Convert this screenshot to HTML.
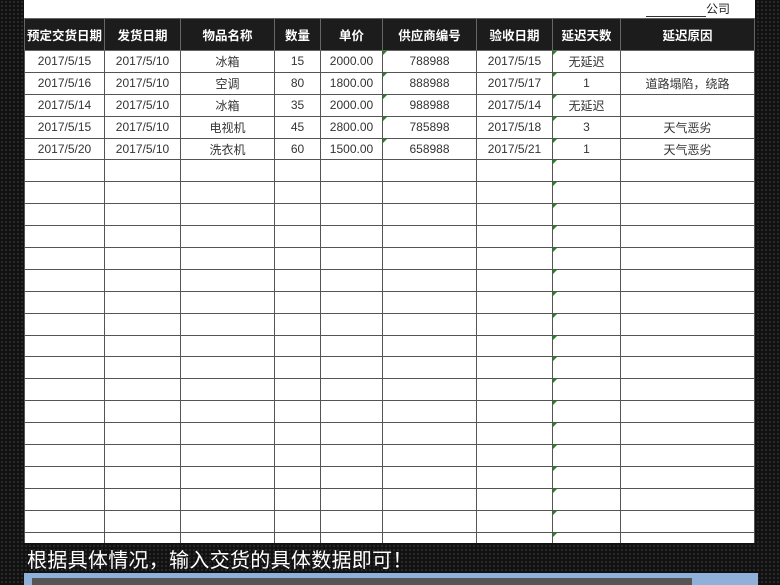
<!DOCTYPE html>
<html><head><meta charset="utf-8"><style>
*{margin:0;padding:0;box-sizing:border-box}
body{width:780px;height:585px;overflow:hidden;position:relative;font-family:"Liberation Sans","Noto Sans CJK SC",sans-serif;
background-color:#111;background-image:radial-gradient(#2a2a2a 1px,transparent 1.3px);background-size:4px 4px}
.sheet{position:absolute;left:24px;top:0;width:731px;height:543px;background:#fff;overflow:hidden}
.co{position:absolute;left:622px;top:0;font-size:12px;color:#222}
.co span{display:inline-block;width:60px;border-bottom:1px solid #333;height:12px;vertical-align:bottom}
table{position:absolute;left:0;top:18px;border-collapse:collapse;table-layout:fixed}
td,th{border:1px solid #555;font-size:12px;text-align:center;color:#333;height:21.9px;padding:0;white-space:nowrap;overflow:hidden;position:relative}
th{background:#1c1c1c;color:#fff;height:32px;font-weight:bold;font-size:12.5px;border-color:#666}
.g::before{content:"";position:absolute;left:0;top:0;border-top:4px solid #1a8a1a;border-right:4px solid transparent}
.txt{position:absolute;left:27px;top:544px;color:#fff;font-size:20px;letter-spacing:0.3px}
.bar{position:absolute;left:24px;top:573px;width:734px;height:12px;background:#8fb0d8}
.bar i{position:absolute;left:8px;top:5px;width:660px;height:7px;background:#555}
</style></head><body>
<div class="sheet">
<div class="co"><span></span>公司</div>
<table>
<colgroup><col style="width:80px"><col style="width:76px"><col style="width:94px"><col style="width:46px"><col style="width:62px"><col style="width:94px"><col style="width:76px"><col style="width:68px"><col style="width:134px"></colgroup>
<tr><th>预定交货日期</th><th>发货日期</th><th>物品名称</th><th>数量</th><th>单价</th><th>供应商编号</th><th>验收日期</th><th>延迟天数</th><th>延迟原因</th></tr>
<tr><td>2017/5/15</td><td>2017/5/10</td><td>冰箱</td><td>15</td><td>2000.00</td><td class="g">788988</td><td>2017/5/15</td><td class="g">无延迟</td><td></td></tr>
<tr><td>2017/5/16</td><td>2017/5/10</td><td>空调</td><td>80</td><td>1800.00</td><td class="g">888988</td><td>2017/5/17</td><td class="g">1</td><td>道路塌陷，绕路</td></tr>
<tr><td>2017/5/14</td><td>2017/5/10</td><td>冰箱</td><td>35</td><td>2000.00</td><td class="g">988988</td><td>2017/5/14</td><td class="g">无延迟</td><td></td></tr>
<tr><td>2017/5/15</td><td>2017/5/10</td><td>电视机</td><td>45</td><td>2800.00</td><td class="g">785898</td><td>2017/5/18</td><td class="g">3</td><td>天气恶劣</td></tr>
<tr><td>2017/5/20</td><td>2017/5/10</td><td>洗衣机</td><td>60</td><td>1500.00</td><td class="g">658988</td><td>2017/5/21</td><td class="g">1</td><td>天气恶劣</td></tr>
<tr><td></td><td></td><td></td><td></td><td></td><td></td><td></td><td class="g"></td><td></td></tr>
<tr><td></td><td></td><td></td><td></td><td></td><td></td><td></td><td class="g"></td><td></td></tr>
<tr><td></td><td></td><td></td><td></td><td></td><td></td><td></td><td class="g"></td><td></td></tr>
<tr><td></td><td></td><td></td><td></td><td></td><td></td><td></td><td class="g"></td><td></td></tr>
<tr><td></td><td></td><td></td><td></td><td></td><td></td><td></td><td class="g"></td><td></td></tr>
<tr><td></td><td></td><td></td><td></td><td></td><td></td><td></td><td class="g"></td><td></td></tr>
<tr><td></td><td></td><td></td><td></td><td></td><td></td><td></td><td class="g"></td><td></td></tr>
<tr><td></td><td></td><td></td><td></td><td></td><td></td><td></td><td class="g"></td><td></td></tr>
<tr><td></td><td></td><td></td><td></td><td></td><td></td><td></td><td class="g"></td><td></td></tr>
<tr><td></td><td></td><td></td><td></td><td></td><td></td><td></td><td class="g"></td><td></td></tr>
<tr><td></td><td></td><td></td><td></td><td></td><td></td><td></td><td class="g"></td><td></td></tr>
<tr><td></td><td></td><td></td><td></td><td></td><td></td><td></td><td class="g"></td><td></td></tr>
<tr><td></td><td></td><td></td><td></td><td></td><td></td><td></td><td class="g"></td><td></td></tr>
<tr><td></td><td></td><td></td><td></td><td></td><td></td><td></td><td class="g"></td><td></td></tr>
<tr><td></td><td></td><td></td><td></td><td></td><td></td><td></td><td class="g"></td><td></td></tr>
<tr><td></td><td></td><td></td><td></td><td></td><td></td><td></td><td class="g"></td><td></td></tr>
<tr><td></td><td></td><td></td><td></td><td></td><td></td><td></td><td class="g"></td><td></td></tr>
<tr><td></td><td></td><td></td><td></td><td></td><td></td><td></td><td class="g"></td><td></td></tr>
</table>
</div>
<div class="txt">根据具体情况，输入交货的具体数据即可！</div>
<div class="bar"><i></i></div>
</body></html>
